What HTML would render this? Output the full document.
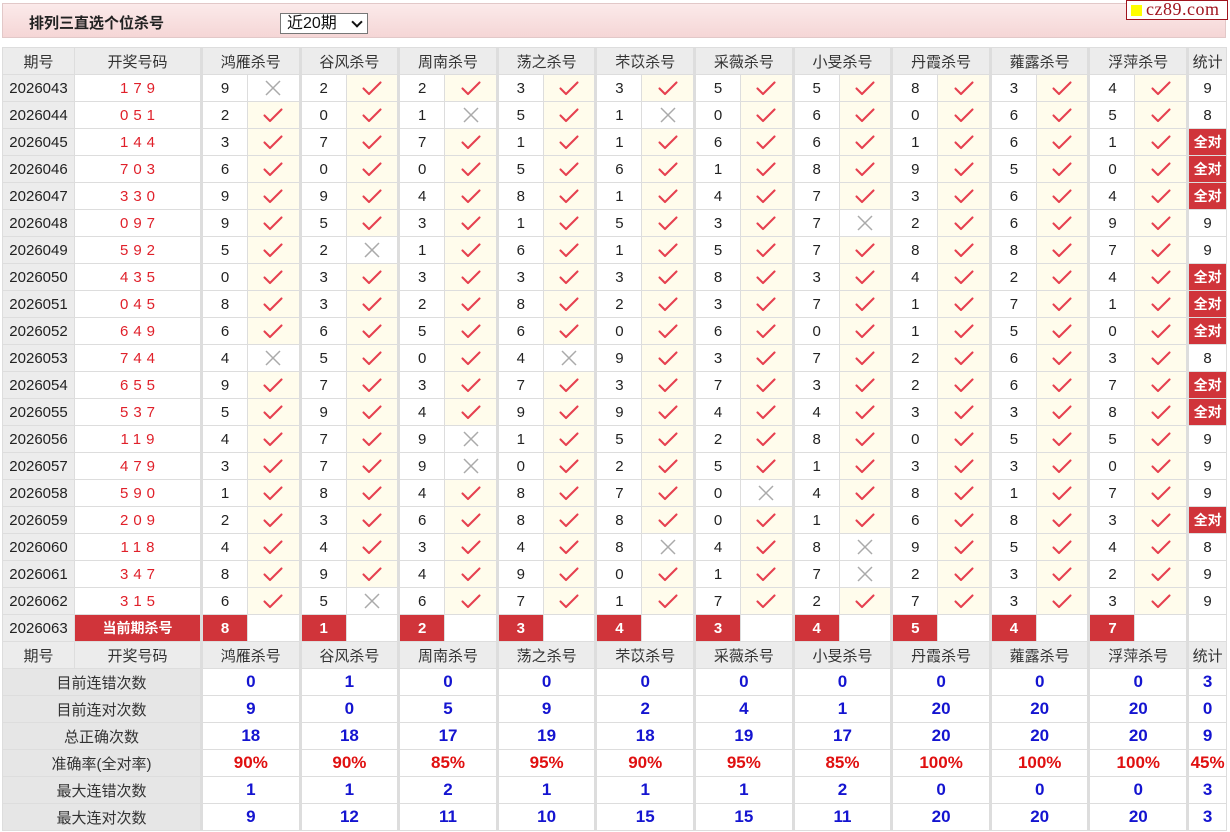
<!DOCTYPE html>
<html><head><meta charset="utf-8"><style>
body{margin:0;width:1230px;height:832px;background:#fff;font-family:"Liberation Sans","Noto Sans CJK SC",sans-serif;overflow:hidden;position:relative}
.bar{position:absolute;left:2px;top:3px;width:1224px;height:35px;border:1px solid #e2c8c8;background:linear-gradient(#fbeaea,#f5d6d6);box-sizing:border-box}
.bar b{position:absolute;left:26px;top:8px;font-size:15px;color:#222}
.sel{position:absolute;left:277px;top:9px;width:88px;height:21px;border:1px solid #777;background:#fff;box-sizing:border-box;font-size:16px;padding-left:6px;line-height:19px;color:#111}
.sel i{position:absolute;right:6px;top:4px;width:6px;height:6px;border-right:2px solid #111;border-bottom:2px solid #111;transform:rotate(45deg)}
.logo{position:absolute;left:1126px;top:0;width:102px;height:20px;border:1px solid #a0141e;background:#fff;box-sizing:border-box;font-family:"Liberation Serif",serif;font-size:18px;color:#a0141e;line-height:17px;padding-left:19px;letter-spacing:0.5px}
.logo i{position:absolute;left:4px;top:4px;width:11px;height:11px;background:#ff0}
table{position:absolute;left:2px;top:47px;width:1224px;border-collapse:collapse;table-layout:fixed;font-size:15px;color:#222}
td{height:26px;border:1px solid #ddd;text-align:center;padding:0;white-space:nowrap;overflow:hidden}
.h td{background:#ececec;color:#333}
td.g{border-left:3px solid #ddd}
td.p{background:#ececec}
td.k{color:#e0202a;letter-spacing:5px;padding-left:5px}
td.y{background:#fffcec}
td.q{background:#d0343a;color:#fff;font-weight:bold;font-size:14px}
td.r{background:#d0343a;color:#fff;font-weight:bold}
td.l{background:#e6e6e6;color:#333}
td.b{color:#1414d0;font-weight:bold;font-size:17px}
td.c{color:#e01010;font-weight:bold;font-size:17px}
svg{display:block;margin:auto}
</style></head><body>
<svg width="0" height="0" style="position:absolute"><defs>
<symbol id="v" viewBox="0 0 22 16"><path d="M2.5 8.5 L8 14 L19.5 2.5" fill="none" stroke="#e6404f" stroke-width="2.1" stroke-linecap="round" stroke-linejoin="round"/></symbol>
<symbol id="x" viewBox="0 0 16 16"><path d="M1 1 L15 15 M15 1 L1 15" fill="none" stroke="#aaa" stroke-width="1.5"/></symbol>
</defs></svg>
<div class="bar"><b>排列三直选个位杀号</b><div class="sel">近20期<i></i></div></div>
<div class="logo"><i></i>cz89.com</div>
<table>
<colgroup><col style="width:72px"><col style="width:127px">
<col style="width:46px"><col style="width:52.6px"><col style="width:46px"><col style="width:52.6px"><col style="width:46px"><col style="width:52.6px"><col style="width:46px"><col style="width:52.6px"><col style="width:46px"><col style="width:52.6px"><col style="width:46px"><col style="width:52.6px"><col style="width:46px"><col style="width:52.6px"><col style="width:46px"><col style="width:52.6px"><col style="width:46px"><col style="width:52.6px"><col style="width:46px"><col style="width:52.6px"><col style="width:39px"></colgroup>
<tr class="h"><td>期号</td><td>开奖号码</td><td class="g" colspan="2">鸿雁杀号</td><td class="g" colspan="2">谷风杀号</td><td class="g" colspan="2">周南杀号</td><td class="g" colspan="2">荡之杀号</td><td class="g" colspan="2">芣苡杀号</td><td class="g" colspan="2">采薇杀号</td><td class="g" colspan="2">小旻杀号</td><td class="g" colspan="2">丹霞杀号</td><td class="g" colspan="2">蕹露杀号</td><td class="g" colspan="2">浮萍杀号</td><td class="g">统计</td></tr>
<tr><td class="p">2026043</td><td class="k">179</td><td class="g">9</td><td><svg width="16" height="16"><use href="#x"/></svg></td><td class="g">2</td><td class="y"><svg width="22" height="16"><use href="#v"/></svg></td><td class="g">2</td><td class="y"><svg width="22" height="16"><use href="#v"/></svg></td><td class="g">3</td><td class="y"><svg width="22" height="16"><use href="#v"/></svg></td><td class="g">3</td><td class="y"><svg width="22" height="16"><use href="#v"/></svg></td><td class="g">5</td><td class="y"><svg width="22" height="16"><use href="#v"/></svg></td><td class="g">5</td><td class="y"><svg width="22" height="16"><use href="#v"/></svg></td><td class="g">8</td><td class="y"><svg width="22" height="16"><use href="#v"/></svg></td><td class="g">3</td><td class="y"><svg width="22" height="16"><use href="#v"/></svg></td><td class="g">4</td><td class="y"><svg width="22" height="16"><use href="#v"/></svg></td><td class="g">9</td></tr>
<tr><td class="p">2026044</td><td class="k">051</td><td class="g">2</td><td class="y"><svg width="22" height="16"><use href="#v"/></svg></td><td class="g">0</td><td class="y"><svg width="22" height="16"><use href="#v"/></svg></td><td class="g">1</td><td><svg width="16" height="16"><use href="#x"/></svg></td><td class="g">5</td><td class="y"><svg width="22" height="16"><use href="#v"/></svg></td><td class="g">1</td><td><svg width="16" height="16"><use href="#x"/></svg></td><td class="g">0</td><td class="y"><svg width="22" height="16"><use href="#v"/></svg></td><td class="g">6</td><td class="y"><svg width="22" height="16"><use href="#v"/></svg></td><td class="g">0</td><td class="y"><svg width="22" height="16"><use href="#v"/></svg></td><td class="g">6</td><td class="y"><svg width="22" height="16"><use href="#v"/></svg></td><td class="g">5</td><td class="y"><svg width="22" height="16"><use href="#v"/></svg></td><td class="g">8</td></tr>
<tr><td class="p">2026045</td><td class="k">144</td><td class="g">3</td><td class="y"><svg width="22" height="16"><use href="#v"/></svg></td><td class="g">7</td><td class="y"><svg width="22" height="16"><use href="#v"/></svg></td><td class="g">7</td><td class="y"><svg width="22" height="16"><use href="#v"/></svg></td><td class="g">1</td><td class="y"><svg width="22" height="16"><use href="#v"/></svg></td><td class="g">1</td><td class="y"><svg width="22" height="16"><use href="#v"/></svg></td><td class="g">6</td><td class="y"><svg width="22" height="16"><use href="#v"/></svg></td><td class="g">6</td><td class="y"><svg width="22" height="16"><use href="#v"/></svg></td><td class="g">1</td><td class="y"><svg width="22" height="16"><use href="#v"/></svg></td><td class="g">6</td><td class="y"><svg width="22" height="16"><use href="#v"/></svg></td><td class="g">1</td><td class="y"><svg width="22" height="16"><use href="#v"/></svg></td><td class="g q">全对</td></tr>
<tr><td class="p">2026046</td><td class="k">703</td><td class="g">6</td><td class="y"><svg width="22" height="16"><use href="#v"/></svg></td><td class="g">0</td><td class="y"><svg width="22" height="16"><use href="#v"/></svg></td><td class="g">0</td><td class="y"><svg width="22" height="16"><use href="#v"/></svg></td><td class="g">5</td><td class="y"><svg width="22" height="16"><use href="#v"/></svg></td><td class="g">6</td><td class="y"><svg width="22" height="16"><use href="#v"/></svg></td><td class="g">1</td><td class="y"><svg width="22" height="16"><use href="#v"/></svg></td><td class="g">8</td><td class="y"><svg width="22" height="16"><use href="#v"/></svg></td><td class="g">9</td><td class="y"><svg width="22" height="16"><use href="#v"/></svg></td><td class="g">5</td><td class="y"><svg width="22" height="16"><use href="#v"/></svg></td><td class="g">0</td><td class="y"><svg width="22" height="16"><use href="#v"/></svg></td><td class="g q">全对</td></tr>
<tr><td class="p">2026047</td><td class="k">330</td><td class="g">9</td><td class="y"><svg width="22" height="16"><use href="#v"/></svg></td><td class="g">9</td><td class="y"><svg width="22" height="16"><use href="#v"/></svg></td><td class="g">4</td><td class="y"><svg width="22" height="16"><use href="#v"/></svg></td><td class="g">8</td><td class="y"><svg width="22" height="16"><use href="#v"/></svg></td><td class="g">1</td><td class="y"><svg width="22" height="16"><use href="#v"/></svg></td><td class="g">4</td><td class="y"><svg width="22" height="16"><use href="#v"/></svg></td><td class="g">7</td><td class="y"><svg width="22" height="16"><use href="#v"/></svg></td><td class="g">3</td><td class="y"><svg width="22" height="16"><use href="#v"/></svg></td><td class="g">6</td><td class="y"><svg width="22" height="16"><use href="#v"/></svg></td><td class="g">4</td><td class="y"><svg width="22" height="16"><use href="#v"/></svg></td><td class="g q">全对</td></tr>
<tr><td class="p">2026048</td><td class="k">097</td><td class="g">9</td><td class="y"><svg width="22" height="16"><use href="#v"/></svg></td><td class="g">5</td><td class="y"><svg width="22" height="16"><use href="#v"/></svg></td><td class="g">3</td><td class="y"><svg width="22" height="16"><use href="#v"/></svg></td><td class="g">1</td><td class="y"><svg width="22" height="16"><use href="#v"/></svg></td><td class="g">5</td><td class="y"><svg width="22" height="16"><use href="#v"/></svg></td><td class="g">3</td><td class="y"><svg width="22" height="16"><use href="#v"/></svg></td><td class="g">7</td><td><svg width="16" height="16"><use href="#x"/></svg></td><td class="g">2</td><td class="y"><svg width="22" height="16"><use href="#v"/></svg></td><td class="g">6</td><td class="y"><svg width="22" height="16"><use href="#v"/></svg></td><td class="g">9</td><td class="y"><svg width="22" height="16"><use href="#v"/></svg></td><td class="g">9</td></tr>
<tr><td class="p">2026049</td><td class="k">592</td><td class="g">5</td><td class="y"><svg width="22" height="16"><use href="#v"/></svg></td><td class="g">2</td><td><svg width="16" height="16"><use href="#x"/></svg></td><td class="g">1</td><td class="y"><svg width="22" height="16"><use href="#v"/></svg></td><td class="g">6</td><td class="y"><svg width="22" height="16"><use href="#v"/></svg></td><td class="g">1</td><td class="y"><svg width="22" height="16"><use href="#v"/></svg></td><td class="g">5</td><td class="y"><svg width="22" height="16"><use href="#v"/></svg></td><td class="g">7</td><td class="y"><svg width="22" height="16"><use href="#v"/></svg></td><td class="g">8</td><td class="y"><svg width="22" height="16"><use href="#v"/></svg></td><td class="g">8</td><td class="y"><svg width="22" height="16"><use href="#v"/></svg></td><td class="g">7</td><td class="y"><svg width="22" height="16"><use href="#v"/></svg></td><td class="g">9</td></tr>
<tr><td class="p">2026050</td><td class="k">435</td><td class="g">0</td><td class="y"><svg width="22" height="16"><use href="#v"/></svg></td><td class="g">3</td><td class="y"><svg width="22" height="16"><use href="#v"/></svg></td><td class="g">3</td><td class="y"><svg width="22" height="16"><use href="#v"/></svg></td><td class="g">3</td><td class="y"><svg width="22" height="16"><use href="#v"/></svg></td><td class="g">3</td><td class="y"><svg width="22" height="16"><use href="#v"/></svg></td><td class="g">8</td><td class="y"><svg width="22" height="16"><use href="#v"/></svg></td><td class="g">3</td><td class="y"><svg width="22" height="16"><use href="#v"/></svg></td><td class="g">4</td><td class="y"><svg width="22" height="16"><use href="#v"/></svg></td><td class="g">2</td><td class="y"><svg width="22" height="16"><use href="#v"/></svg></td><td class="g">4</td><td class="y"><svg width="22" height="16"><use href="#v"/></svg></td><td class="g q">全对</td></tr>
<tr><td class="p">2026051</td><td class="k">045</td><td class="g">8</td><td class="y"><svg width="22" height="16"><use href="#v"/></svg></td><td class="g">3</td><td class="y"><svg width="22" height="16"><use href="#v"/></svg></td><td class="g">2</td><td class="y"><svg width="22" height="16"><use href="#v"/></svg></td><td class="g">8</td><td class="y"><svg width="22" height="16"><use href="#v"/></svg></td><td class="g">2</td><td class="y"><svg width="22" height="16"><use href="#v"/></svg></td><td class="g">3</td><td class="y"><svg width="22" height="16"><use href="#v"/></svg></td><td class="g">7</td><td class="y"><svg width="22" height="16"><use href="#v"/></svg></td><td class="g">1</td><td class="y"><svg width="22" height="16"><use href="#v"/></svg></td><td class="g">7</td><td class="y"><svg width="22" height="16"><use href="#v"/></svg></td><td class="g">1</td><td class="y"><svg width="22" height="16"><use href="#v"/></svg></td><td class="g q">全对</td></tr>
<tr><td class="p">2026052</td><td class="k">649</td><td class="g">6</td><td class="y"><svg width="22" height="16"><use href="#v"/></svg></td><td class="g">6</td><td class="y"><svg width="22" height="16"><use href="#v"/></svg></td><td class="g">5</td><td class="y"><svg width="22" height="16"><use href="#v"/></svg></td><td class="g">6</td><td class="y"><svg width="22" height="16"><use href="#v"/></svg></td><td class="g">0</td><td class="y"><svg width="22" height="16"><use href="#v"/></svg></td><td class="g">6</td><td class="y"><svg width="22" height="16"><use href="#v"/></svg></td><td class="g">0</td><td class="y"><svg width="22" height="16"><use href="#v"/></svg></td><td class="g">1</td><td class="y"><svg width="22" height="16"><use href="#v"/></svg></td><td class="g">5</td><td class="y"><svg width="22" height="16"><use href="#v"/></svg></td><td class="g">0</td><td class="y"><svg width="22" height="16"><use href="#v"/></svg></td><td class="g q">全对</td></tr>
<tr><td class="p">2026053</td><td class="k">744</td><td class="g">4</td><td><svg width="16" height="16"><use href="#x"/></svg></td><td class="g">5</td><td class="y"><svg width="22" height="16"><use href="#v"/></svg></td><td class="g">0</td><td class="y"><svg width="22" height="16"><use href="#v"/></svg></td><td class="g">4</td><td><svg width="16" height="16"><use href="#x"/></svg></td><td class="g">9</td><td class="y"><svg width="22" height="16"><use href="#v"/></svg></td><td class="g">3</td><td class="y"><svg width="22" height="16"><use href="#v"/></svg></td><td class="g">7</td><td class="y"><svg width="22" height="16"><use href="#v"/></svg></td><td class="g">2</td><td class="y"><svg width="22" height="16"><use href="#v"/></svg></td><td class="g">6</td><td class="y"><svg width="22" height="16"><use href="#v"/></svg></td><td class="g">3</td><td class="y"><svg width="22" height="16"><use href="#v"/></svg></td><td class="g">8</td></tr>
<tr><td class="p">2026054</td><td class="k">655</td><td class="g">9</td><td class="y"><svg width="22" height="16"><use href="#v"/></svg></td><td class="g">7</td><td class="y"><svg width="22" height="16"><use href="#v"/></svg></td><td class="g">3</td><td class="y"><svg width="22" height="16"><use href="#v"/></svg></td><td class="g">7</td><td class="y"><svg width="22" height="16"><use href="#v"/></svg></td><td class="g">3</td><td class="y"><svg width="22" height="16"><use href="#v"/></svg></td><td class="g">7</td><td class="y"><svg width="22" height="16"><use href="#v"/></svg></td><td class="g">3</td><td class="y"><svg width="22" height="16"><use href="#v"/></svg></td><td class="g">2</td><td class="y"><svg width="22" height="16"><use href="#v"/></svg></td><td class="g">6</td><td class="y"><svg width="22" height="16"><use href="#v"/></svg></td><td class="g">7</td><td class="y"><svg width="22" height="16"><use href="#v"/></svg></td><td class="g q">全对</td></tr>
<tr><td class="p">2026055</td><td class="k">537</td><td class="g">5</td><td class="y"><svg width="22" height="16"><use href="#v"/></svg></td><td class="g">9</td><td class="y"><svg width="22" height="16"><use href="#v"/></svg></td><td class="g">4</td><td class="y"><svg width="22" height="16"><use href="#v"/></svg></td><td class="g">9</td><td class="y"><svg width="22" height="16"><use href="#v"/></svg></td><td class="g">9</td><td class="y"><svg width="22" height="16"><use href="#v"/></svg></td><td class="g">4</td><td class="y"><svg width="22" height="16"><use href="#v"/></svg></td><td class="g">4</td><td class="y"><svg width="22" height="16"><use href="#v"/></svg></td><td class="g">3</td><td class="y"><svg width="22" height="16"><use href="#v"/></svg></td><td class="g">3</td><td class="y"><svg width="22" height="16"><use href="#v"/></svg></td><td class="g">8</td><td class="y"><svg width="22" height="16"><use href="#v"/></svg></td><td class="g q">全对</td></tr>
<tr><td class="p">2026056</td><td class="k">119</td><td class="g">4</td><td class="y"><svg width="22" height="16"><use href="#v"/></svg></td><td class="g">7</td><td class="y"><svg width="22" height="16"><use href="#v"/></svg></td><td class="g">9</td><td><svg width="16" height="16"><use href="#x"/></svg></td><td class="g">1</td><td class="y"><svg width="22" height="16"><use href="#v"/></svg></td><td class="g">5</td><td class="y"><svg width="22" height="16"><use href="#v"/></svg></td><td class="g">2</td><td class="y"><svg width="22" height="16"><use href="#v"/></svg></td><td class="g">8</td><td class="y"><svg width="22" height="16"><use href="#v"/></svg></td><td class="g">0</td><td class="y"><svg width="22" height="16"><use href="#v"/></svg></td><td class="g">5</td><td class="y"><svg width="22" height="16"><use href="#v"/></svg></td><td class="g">5</td><td class="y"><svg width="22" height="16"><use href="#v"/></svg></td><td class="g">9</td></tr>
<tr><td class="p">2026057</td><td class="k">479</td><td class="g">3</td><td class="y"><svg width="22" height="16"><use href="#v"/></svg></td><td class="g">7</td><td class="y"><svg width="22" height="16"><use href="#v"/></svg></td><td class="g">9</td><td><svg width="16" height="16"><use href="#x"/></svg></td><td class="g">0</td><td class="y"><svg width="22" height="16"><use href="#v"/></svg></td><td class="g">2</td><td class="y"><svg width="22" height="16"><use href="#v"/></svg></td><td class="g">5</td><td class="y"><svg width="22" height="16"><use href="#v"/></svg></td><td class="g">1</td><td class="y"><svg width="22" height="16"><use href="#v"/></svg></td><td class="g">3</td><td class="y"><svg width="22" height="16"><use href="#v"/></svg></td><td class="g">3</td><td class="y"><svg width="22" height="16"><use href="#v"/></svg></td><td class="g">0</td><td class="y"><svg width="22" height="16"><use href="#v"/></svg></td><td class="g">9</td></tr>
<tr><td class="p">2026058</td><td class="k">590</td><td class="g">1</td><td class="y"><svg width="22" height="16"><use href="#v"/></svg></td><td class="g">8</td><td class="y"><svg width="22" height="16"><use href="#v"/></svg></td><td class="g">4</td><td class="y"><svg width="22" height="16"><use href="#v"/></svg></td><td class="g">8</td><td class="y"><svg width="22" height="16"><use href="#v"/></svg></td><td class="g">7</td><td class="y"><svg width="22" height="16"><use href="#v"/></svg></td><td class="g">0</td><td><svg width="16" height="16"><use href="#x"/></svg></td><td class="g">4</td><td class="y"><svg width="22" height="16"><use href="#v"/></svg></td><td class="g">8</td><td class="y"><svg width="22" height="16"><use href="#v"/></svg></td><td class="g">1</td><td class="y"><svg width="22" height="16"><use href="#v"/></svg></td><td class="g">7</td><td class="y"><svg width="22" height="16"><use href="#v"/></svg></td><td class="g">9</td></tr>
<tr><td class="p">2026059</td><td class="k">209</td><td class="g">2</td><td class="y"><svg width="22" height="16"><use href="#v"/></svg></td><td class="g">3</td><td class="y"><svg width="22" height="16"><use href="#v"/></svg></td><td class="g">6</td><td class="y"><svg width="22" height="16"><use href="#v"/></svg></td><td class="g">8</td><td class="y"><svg width="22" height="16"><use href="#v"/></svg></td><td class="g">8</td><td class="y"><svg width="22" height="16"><use href="#v"/></svg></td><td class="g">0</td><td class="y"><svg width="22" height="16"><use href="#v"/></svg></td><td class="g">1</td><td class="y"><svg width="22" height="16"><use href="#v"/></svg></td><td class="g">6</td><td class="y"><svg width="22" height="16"><use href="#v"/></svg></td><td class="g">8</td><td class="y"><svg width="22" height="16"><use href="#v"/></svg></td><td class="g">3</td><td class="y"><svg width="22" height="16"><use href="#v"/></svg></td><td class="g q">全对</td></tr>
<tr><td class="p">2026060</td><td class="k">118</td><td class="g">4</td><td class="y"><svg width="22" height="16"><use href="#v"/></svg></td><td class="g">4</td><td class="y"><svg width="22" height="16"><use href="#v"/></svg></td><td class="g">3</td><td class="y"><svg width="22" height="16"><use href="#v"/></svg></td><td class="g">4</td><td class="y"><svg width="22" height="16"><use href="#v"/></svg></td><td class="g">8</td><td><svg width="16" height="16"><use href="#x"/></svg></td><td class="g">4</td><td class="y"><svg width="22" height="16"><use href="#v"/></svg></td><td class="g">8</td><td><svg width="16" height="16"><use href="#x"/></svg></td><td class="g">9</td><td class="y"><svg width="22" height="16"><use href="#v"/></svg></td><td class="g">5</td><td class="y"><svg width="22" height="16"><use href="#v"/></svg></td><td class="g">4</td><td class="y"><svg width="22" height="16"><use href="#v"/></svg></td><td class="g">8</td></tr>
<tr><td class="p">2026061</td><td class="k">347</td><td class="g">8</td><td class="y"><svg width="22" height="16"><use href="#v"/></svg></td><td class="g">9</td><td class="y"><svg width="22" height="16"><use href="#v"/></svg></td><td class="g">4</td><td class="y"><svg width="22" height="16"><use href="#v"/></svg></td><td class="g">9</td><td class="y"><svg width="22" height="16"><use href="#v"/></svg></td><td class="g">0</td><td class="y"><svg width="22" height="16"><use href="#v"/></svg></td><td class="g">1</td><td class="y"><svg width="22" height="16"><use href="#v"/></svg></td><td class="g">7</td><td><svg width="16" height="16"><use href="#x"/></svg></td><td class="g">2</td><td class="y"><svg width="22" height="16"><use href="#v"/></svg></td><td class="g">3</td><td class="y"><svg width="22" height="16"><use href="#v"/></svg></td><td class="g">2</td><td class="y"><svg width="22" height="16"><use href="#v"/></svg></td><td class="g">9</td></tr>
<tr><td class="p">2026062</td><td class="k">315</td><td class="g">6</td><td class="y"><svg width="22" height="16"><use href="#v"/></svg></td><td class="g">5</td><td><svg width="16" height="16"><use href="#x"/></svg></td><td class="g">6</td><td class="y"><svg width="22" height="16"><use href="#v"/></svg></td><td class="g">7</td><td class="y"><svg width="22" height="16"><use href="#v"/></svg></td><td class="g">1</td><td class="y"><svg width="22" height="16"><use href="#v"/></svg></td><td class="g">7</td><td class="y"><svg width="22" height="16"><use href="#v"/></svg></td><td class="g">2</td><td class="y"><svg width="22" height="16"><use href="#v"/></svg></td><td class="g">7</td><td class="y"><svg width="22" height="16"><use href="#v"/></svg></td><td class="g">3</td><td class="y"><svg width="22" height="16"><use href="#v"/></svg></td><td class="g">3</td><td class="y"><svg width="22" height="16"><use href="#v"/></svg></td><td class="g">9</td></tr>
<tr><td class="p">2026063</td><td class="q">当前期杀号</td><td class="g r">8</td><td></td><td class="g r">1</td><td></td><td class="g r">2</td><td></td><td class="g r">3</td><td></td><td class="g r">4</td><td></td><td class="g r">3</td><td></td><td class="g r">4</td><td></td><td class="g r">5</td><td></td><td class="g r">4</td><td></td><td class="g r">7</td><td></td><td class="g"></td></tr>
<tr class="h"><td>期号</td><td>开奖号码</td><td class="g" colspan="2">鸿雁杀号</td><td class="g" colspan="2">谷风杀号</td><td class="g" colspan="2">周南杀号</td><td class="g" colspan="2">荡之杀号</td><td class="g" colspan="2">芣苡杀号</td><td class="g" colspan="2">采薇杀号</td><td class="g" colspan="2">小旻杀号</td><td class="g" colspan="2">丹霞杀号</td><td class="g" colspan="2">蕹露杀号</td><td class="g" colspan="2">浮萍杀号</td><td class="g">统计</td></tr>
<tr><td class="l" colspan="2">目前连错次数</td><td class="g b" colspan="2">0</td><td class="g b" colspan="2">1</td><td class="g b" colspan="2">0</td><td class="g b" colspan="2">0</td><td class="g b" colspan="2">0</td><td class="g b" colspan="2">0</td><td class="g b" colspan="2">0</td><td class="g b" colspan="2">0</td><td class="g b" colspan="2">0</td><td class="g b" colspan="2">0</td><td class="g b">3</td></tr>
<tr><td class="l" colspan="2">目前连对次数</td><td class="g b" colspan="2">9</td><td class="g b" colspan="2">0</td><td class="g b" colspan="2">5</td><td class="g b" colspan="2">9</td><td class="g b" colspan="2">2</td><td class="g b" colspan="2">4</td><td class="g b" colspan="2">1</td><td class="g b" colspan="2">20</td><td class="g b" colspan="2">20</td><td class="g b" colspan="2">20</td><td class="g b">0</td></tr>
<tr><td class="l" colspan="2">总正确次数</td><td class="g b" colspan="2">18</td><td class="g b" colspan="2">18</td><td class="g b" colspan="2">17</td><td class="g b" colspan="2">19</td><td class="g b" colspan="2">18</td><td class="g b" colspan="2">19</td><td class="g b" colspan="2">17</td><td class="g b" colspan="2">20</td><td class="g b" colspan="2">20</td><td class="g b" colspan="2">20</td><td class="g b">9</td></tr>
<tr><td class="l" colspan="2">准确率(全对率)</td><td class="g c" colspan="2">90%</td><td class="g c" colspan="2">90%</td><td class="g c" colspan="2">85%</td><td class="g c" colspan="2">95%</td><td class="g c" colspan="2">90%</td><td class="g c" colspan="2">95%</td><td class="g c" colspan="2">85%</td><td class="g c" colspan="2">100%</td><td class="g c" colspan="2">100%</td><td class="g c" colspan="2">100%</td><td class="g c">45%</td></tr>
<tr><td class="l" colspan="2">最大连错次数</td><td class="g b" colspan="2">1</td><td class="g b" colspan="2">1</td><td class="g b" colspan="2">2</td><td class="g b" colspan="2">1</td><td class="g b" colspan="2">1</td><td class="g b" colspan="2">1</td><td class="g b" colspan="2">2</td><td class="g b" colspan="2">0</td><td class="g b" colspan="2">0</td><td class="g b" colspan="2">0</td><td class="g b">3</td></tr>
<tr><td class="l" colspan="2">最大连对次数</td><td class="g b" colspan="2">9</td><td class="g b" colspan="2">12</td><td class="g b" colspan="2">11</td><td class="g b" colspan="2">10</td><td class="g b" colspan="2">15</td><td class="g b" colspan="2">15</td><td class="g b" colspan="2">11</td><td class="g b" colspan="2">20</td><td class="g b" colspan="2">20</td><td class="g b" colspan="2">20</td><td class="g b">3</td></tr>
</table>
</body></html>
